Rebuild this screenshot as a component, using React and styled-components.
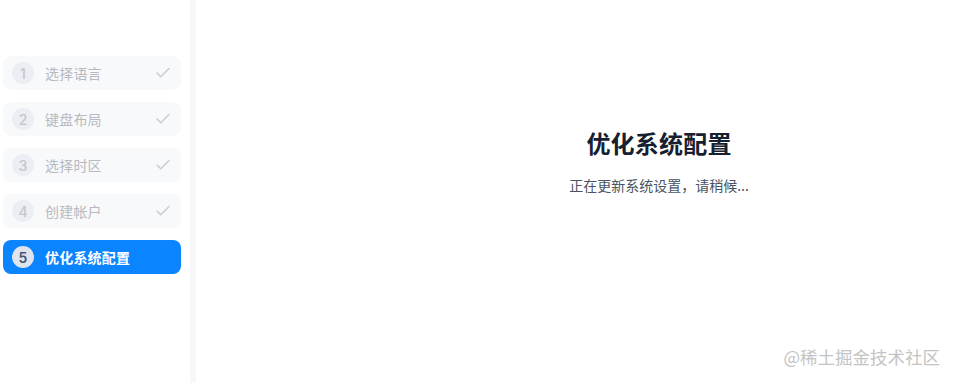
import React from "react";
import styled, { createGlobalStyle } from "styled-components";

const Global = createGlobalStyle`
  html, body, #root { margin: 0; padding: 0; height: 100%; }
  body {
    background: #ffffff;
    font-family: "Noto Sans CJK SC", "Noto Sans", Inter, sans-serif;
  }
`;

const Page = styled.div`
  position: relative;
  display: flex;
  width: 956px;
  height: 383px;
  background: #ffffff;
  overflow: hidden;
`;

const Sidebar = styled.aside`
  flex: 0 0 196px;
  display: flex;
  flex-direction: column;
  gap: 12px;
  padding: 56px 9px 0 3px;
  box-sizing: border-box;
  border-right: 6px solid #f7f8fa;
`;

const Step = styled.div`
  display: flex;
  align-items: center;
  height: 34px;
  padding: 0 9px;
  border-radius: 8px;
  background: ${(p) => (p.$active ? "#0a84ff" : "#f8f9fa")};
  color: ${(p) => (p.$active ? "#ffffff" : "#b6b9bf")};
`;

const Num = styled.span`
  flex: 0 0 22px;
  height: 22px;
  border-radius: 50%;
  display: flex;
  align-items: center;
  justify-content: center;
  font-family: Inter, "Noto Sans", sans-serif;
  font-size: 14px;
  font-weight: ${(p) => (p.$active ? 600 : 500)};
  background: ${(p) => (p.$active ? "#dfe4ef" : "#eceef3")};
  color: ${(p) => (p.$active ? "#475575" : "#c3c6ce")};
`;

const Label = styled.span`
  flex: 1;
  margin-left: 11px;
  font-size: 14px;
  font-weight: ${(p) => (p.$active ? 700 : 400)};
  letter-spacing: 0.2px;
`;

const Check = styled.svg`
  width: 18px;
  height: 18px;
  color: #c9ccd2;
`;

const Main = styled.main`
  flex: 1;
  display: flex;
  flex-direction: column;
  align-items: center;
  padding: 126px 0 0 166px;
  box-sizing: border-box;
`;

const Title = styled.h1`
  margin: 0;
  font-size: 24px;
  line-height: 34px;
  font-weight: 700;
  color: #16202e;
  letter-spacing: 0.2px;
`;

const Subtitle = styled.p`
  margin: 15px 0 0;
  font-size: 14px;
  line-height: 20px;
  color: #4a5361;
`;

const Watermark = styled.div`
  position: absolute;
  right: 16px;
  bottom: 14px;
  font-size: 17.5px;
  line-height: 24px;
  color: #c4c4c4;
`;

const steps = ["选择语言", "键盘布局", "选择时区", "创建帐户", "优化系统配置"];

export default function App() {
  return (
    <Page>
      <Global />
      <Sidebar>
        {steps.map((s, i) => {
          const active = i === steps.length - 1;
          return (
            <Step key={s} $active={active}>
              <Num $active={active}>{i + 1}</Num>
              <Label $active={active}>{s}</Label>
              {!active && (
                <Check viewBox="0 0 24 24" fill="none" stroke="currentColor" strokeWidth="2" strokeLinecap="round" strokeLinejoin="round">
                  <path d="M20 6 9 17l-5-5" />
                </Check>
              )}
            </Step>
          );
        })}
      </Sidebar>
      <Main>
        <Title>优化系统配置</Title>
        <Subtitle>正在更新系统设置，请稍候...</Subtitle>
      </Main>
      <Watermark>@稀土掘金技术社区</Watermark>
    </Page>
  );
}
